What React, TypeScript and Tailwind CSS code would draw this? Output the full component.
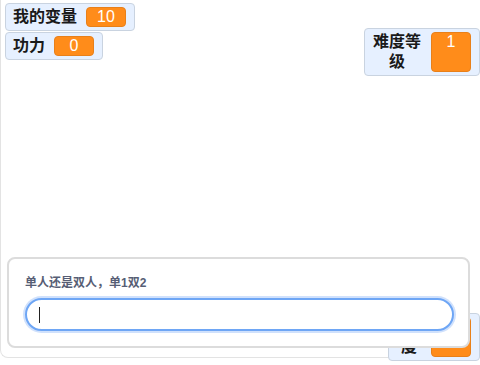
import React from "react";

const font = { fontFamily: '"Liberation Sans", "Noto Sans CJK SC", sans-serif' };

function Monitor({
  label,
  value,
  className,
  labelClass = "",
}: {
  label: string;
  value: string;
  className: string;
  labelClass?: string;
}) {
  return (
    <div
      className={`absolute flex items-stretch rounded-[4px] border border-[#c9d3e0] bg-[#e6f0ff] p-[3px] ${className}`}
    >
      <div
        className={`mx-[4px] text-[16px] font-bold leading-[20px] text-[#1a1a1a] ${labelClass}`}
      >
        {label}
      </div>
      <div className="mx-[5px] min-w-[40px] rounded-[4px] border border-[#e8801a] bg-[#ff8c1a] px-[2px] text-center text-[16px] leading-[18px] text-white">
        {value}
      </div>
    </div>
  );
}

export default function App() {
  return (
    <div className="relative h-[365px] w-[480px] overflow-hidden bg-white" style={font}>
      <div className="relative h-[358px] w-[480px] rounded-bl-[8px] border-b border-l border-[#e3e3e3] bg-white">
        <Monitor label="我的变量" value="10" className="left-[4px] top-[3px]" />
        <Monitor label="功力" value="0" className="left-[4px] top-[32px]" />
        <Monitor
          label="难度等级"
          value="1"
          className="left-[363px] top-[28px]"
          labelClass="w-[50px] text-center"
        />
        <Monitor
          label="速度"
          value=""
          className="left-[387px] top-[313px]"
          labelClass="w-[26px] text-center break-all"
        />

        <div className="absolute left-[6px] top-[257px] flex h-[91px] w-[463px] flex-col gap-[6px] rounded-[8px] border-2 border-[#dcdcdc] bg-white px-[16px] pt-[15px]">
          <div className="text-[12px] font-bold leading-[18px] text-[#575e75]">
            单人还是双人，单1双2
          </div>
          <div className="flex h-[33px] w-[429px] items-center rounded-full border-2 border-[#6ea6f5] bg-white pl-[12px] shadow-[0_0_0_2px_rgba(120,170,245,0.35)]">
            <span className="h-[16px] w-px bg-[#222]" />
          </div>
        </div>
      </div>
    </div>
  );
}
